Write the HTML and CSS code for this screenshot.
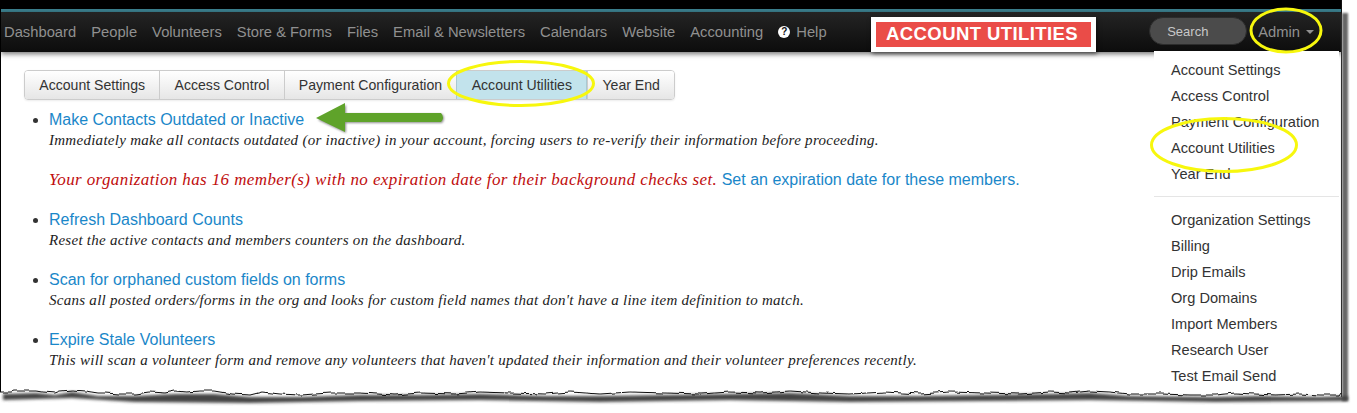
FILE: index.html
```html
<!DOCTYPE html>
<html lang="en">
<head>
<meta charset="utf-8">
<title>Account Utilities</title>
<link rel="stylesheet" href="styles.css">
</head>
<body>
<div class="shot">
  <div class="topband"></div>
  <nav class="navbar">
    <ul class="navlinks">
      <li>Dashboard</li>
      <li>People</li>
      <li>Volunteers</li>
      <li>Store &amp; Forms</li>
      <li>Files</li>
      <li>Email &amp; Newsletters</li>
      <li>Calendars</li>
      <li>Website</li>
      <li>Accounting</li>
      <li class="help"><span class="helpicon">?</span>Help</li>
    </ul>
    <div class="navright">
      <div class="search">Search</div>
      <div class="admin">Admin<span class="caret"></span></div>
    </div>
  </nav>
  <main class="content">
    <div class="tabs">
      <div class="tab">Account Settings</div>
      <div class="tab">Access Control</div>
      <div class="tab">Payment Configuration</div>
      <div class="tab active">Account Utilities</div>
      <div class="tab">Year End</div>
    </div>
    <ul class="utils">
      <li>
        <a class="link">Make Contacts Outdated or Inactive</a>
        <p class="desc">Immediately make all contacts outdated (or inactive) in your account, forcing users to re-verify their information before proceeding.</p>
      </li>
      <li class="plain">
        <p class="warn"><em>Your organization has 16 member(s) with no expiration date for their background checks set.</em> <a class="link">Set an expiration date for these members.</a></p>
      </li>
      <li>
        <a class="link">Refresh Dashboard Counts</a>
        <p class="desc">Reset the active contacts and members counters on the dashboard.</p>
      </li>
      <li>
        <a class="link">Scan for orphaned custom fields on forms</a>
        <p class="desc">Scans all posted orders/forms in the org and looks for custom field names that don't have a line item definition to match.</p>
      </li>
      <li>
        <a class="link">Expire Stale Volunteers</a>
        <p class="desc">This will scan a volunteer form and remove any volunteers that haven't updated their information and their volunteer preferences recently.</p>
      </li>
    </ul>
  </main>
  <div class="menu">
    <div class="menuitem">Account Settings</div>
    <div class="menuitem">Access Control</div>
    <div class="menuitem">Payment Configuration</div>
    <div class="menuitem">Account Utilities</div>
    <div class="menuitem">Year End</div>
    <div class="divider"></div>
    <div class="menuitem">Organization Settings</div>
    <div class="menuitem">Billing</div>
    <div class="menuitem">Drip Emails</div>
    <div class="menuitem">Org Domains</div>
    <div class="menuitem">Import Members</div>
    <div class="menuitem">Research User</div>
    <div class="menuitem">Test Email Send</div>
  </div>
  <div class="callout"><span>ACCOUNT UTILITIES</span></div>
</div>
<svg class="marks" width="1357" height="413" viewBox="0 0 1357 413" aria-hidden="true">
  <defs>
    <filter id="soft" x="-5%" y="-50%" width="110%" height="200%"><feGaussianBlur stdDeviation="1.4"/></filter>
    <filter id="softside" x="-300%" y="-5%" width="700%" height="110%"><feGaussianBlur stdDeviation="1.3"/></filter>
    <filter id="rough" x="-1%" y="-50%" width="102%" height="200%" filterUnits="objectBoundingBox">
      <feTurbulence type="fractalNoise" baseFrequency="0.09 0.02" numOctaves="2" seed="7"/>
      <feDisplacementMap in="SourceGraphic" scale="5" yChannelSelector="G" xChannelSelector="R"/>
    </filter>
    <filter id="arrowshadow" x="-20%" y="-50%" width="140%" height="200%"><feGaussianBlur stdDeviation="1.2"/></filter>
  </defs>
  <rect class="sideshadow" filter="url(#softside)" x="1342" y="13" width="6" height="388"/>
  <g filter="url(#rough)">
    <path class="tornwhite" d="M-6 392 L10 392 L14 391 L36 391 L42 392 L55 393 L60 391 L72 390 L85 391 L98 393 L106 393 L118 394 L135 394 L150 392 L165 393 L175 391 L186 392 L200 391 L214 391 L232 394 L250 395 L262 392 L280 394 L300 395 L330 393 L360 393 L395 395 L420 393 L455 394 L480 392 L510 393 L545 394 L570 392 L600 394 L630 392 L665 393 L700 394 L730 392 L760 393 L790 391 L820 393 L850 394 L885 392 L920 394 L950 392 L985 393 L1020 394 L1050 392 L1070 393 L1090 391 L1110 392 L1130 394 L1160 394 L1190 395 L1215 395 L1235 393 L1255 394 L1275 395 L1300 394 L1320 395 L1339 395 L1341 392 L1341 420 L-6 420 Z"/>
  </g>
  <g filter="url(#soft)">
    <path class="tornshadow" d="M3 394 L36 393 L55 395 L72 392 L98 396 L135 396 L175 394 L214 394 L250 397 L300 397 L360 395 L420 395 L480 394 L545 396 L600 396 L665 395 L730 394 L790 393 L850 396 L920 396 L985 395 L1050 394 L1090 393 L1130 396 L1215 397 L1255 396 L1320 397 L1348 396 L1348 401 L1215 402 L1090 400 L985 401 L850 402 L730 400 L600 402 L480 400 L360 401 L250 403 L135 402 L72 398 L3 400 Z"/>
  </g>
  <g filter="url(#rough)">
    <path class="tornline" d="M-6 392 L10 392 L14 391 L36 391 L42 392 L55 393 L60 391 L72 390 L85 391 L98 393 L106 393 L118 394 L135 394 L150 392 L165 393 L175 391 L186 392 L200 391 L214 391 L232 394 L250 395 L262 392 L280 394 L300 395 L330 393 L360 393 L395 395 L420 393 L455 394 L480 392 L510 393 L545 394 L570 392 L600 394 L630 392 L665 393 L700 394 L730 392 L760 393 L790 391 L820 393 L850 394 L885 392 L920 394 L950 392 L985 393 L1020 394 L1050 392 L1070 393 L1090 391 L1110 392 L1130 394 L1160 394 L1190 395 L1215 395 L1235 393 L1255 394 L1275 395 L1300 394 L1320 395 L1339 395 L1341 392"/>
  </g>
  <ellipse class="ring" cx="521" cy="83.500" rx="72.500" ry="22"/>
  <ellipse class="ring" cx="1286" cy="30.500" rx="35" ry="21.500"/>
  <ellipse class="ring" cx="1224" cy="145" rx="72.500" ry="26.500"/>
  <path class="arrowshade" filter="url(#arrowshadow)" d="M318 120 L346 105 L346 114 L442 114 Q446 118 442 123 L346 123 L346 133 Z"/>
  <path class="arrow" d="M316 118 L345 103 L345 113 L441 113 Q445 117.500 441 122 L345 122 L345 132 Z"/>
</svg>
</body>
</html>
```
FILE: styles.css
```css
* { box-sizing: border-box; }
html, body { margin: 0; padding: 0; background: #fff; }
body {
  width: 1357px;
  height: 413px;
  overflow: hidden;
  position: relative;
  font-family: "Liberation Sans", Arial, sans-serif;
}
.shot {
  position: relative;
  width: 1342px;
  height: 397px;
  border-left: 1px solid #000;
  border-right: 1px solid #111;
  background: #fff;
  overflow: hidden;
}
.topband {
  height: 12px;
  background: #000;
  border-bottom: 3px solid #3b7f8e;
}
.navbar {
  height: 40px;
  display: flex;
  align-items: center;
  justify-content: space-between;
  padding: 0 27px 0 3px;
  background: linear-gradient(#242424, #0c0c0c);
  box-shadow: 0 2px 5px rgba(0,0,0,.55);
  position: relative;
  color: #909090;
  font-size: 14.75px;
}
.navlinks {
  list-style: none;
  margin: 0;
  padding: 0;
  display: flex;
  gap: 15px;
}
.help { display: flex; align-items: center; }
.helpicon {
  width: 12px;
  height: 12px;
  border-radius: 50%;
  background: #fff;
  color: #111;
  font-size: 10px;
  font-weight: bold;
  line-height: 12px;
  text-align: center;
  margin-right: 6px;
}
.navright { display: flex; align-items: center; gap: 11px; }
.search {
  width: 98px;
  height: 28px;
  margin-top: -2px;
  padding-left: 17px;
  border-radius: 14px;
  background: #4b4b4b;
  border: 1px solid #2c2c2c;
  color: #c8c8c8;
  font-size: 13px;
  line-height: 27px;
}
.admin { display: flex; align-items: center; }
.caret {
  margin-left: 6px;
  border-left: 4px solid transparent;
  border-right: 4px solid transparent;
  border-top: 4px solid #909090;
}
.content { padding: 18px 0 0 23px; }
.tabs {
  display: inline-flex;
  height: 30px;
  border: 1px solid #ccc;
  border-radius: 4px;
  box-shadow: 0 1px 2px rgba(0,0,0,.08);
  overflow: hidden;
}
.tab {
  padding: 0 14.25px;
  font-size: 14.1px;
  line-height: 28px;
  color: #333;
  background: linear-gradient(#fff, #e6e6e6);
  border-left: 1px solid #ccc;
}
.tab:first-child { border-left: 0; }
.tab.active {
  background: #c2e3ec;
  border-left-color: #a9c9d2;
  border-right: 1px solid #a9c9d2;
}
.utils {
  margin: 10px 0 0;
  padding: 0 0 0 25px;
  color: #333;
}
.utils li { height: 60px; }
.utils li.plain { height: 40px; list-style: none; }
.link { color: #1a87c9; font-size: 16px; line-height: 20px; }
.desc, .warn { margin: 0; }
.desc {
  font-family: "Liberation Serif", Georgia, serif;
  font-style: italic;
  font-size: 15px;
  line-height: 20px;
  letter-spacing: .27px;
  color: #222;
}
.warn { line-height: 20px; white-space: nowrap; }
.warn em {
  font-family: "Liberation Serif", Georgia, serif;
  font-size: 17px;
  letter-spacing: .39px;
  color: #c00d0d;
}
.menu {
  position: absolute;
  top: 51px;
  left: 1153px;
  width: 185px;
  height: 347px;
  padding: 6px 0 0 17px;
  background: #fff;
  border-radius: 0 0 4px 4px;
  font-size: 14.6px;
  color: #333;
}
.menuitem { height: 26px; line-height: 26px; white-space: nowrap; }
.divider {
  height: 1px;
  margin: 9px 0 10px -17px;
  background: #e5e5e5;
}
.callout {
  position: absolute;
  top: 17px;
  left: 870px;
  width: 225px;
  height: 35px;
  padding: 5px;
  background: #fff;
  box-shadow: 1px 2px 4px rgba(0,0,0,.5);
}
.callout span {
  display: block;
  height: 25px;
  padding-left: 10px;
  background: #ea4c48;
  color: #fff;
  font-size: 18.5px;
  font-weight: bold;
  letter-spacing: .42px;
  line-height: 23px;
  white-space: nowrap;
}
.marks { position: absolute; top: 0; left: 0; }
.tornwhite { fill: #fff; }
.tornshadow { fill: #444; }
.sideshadow { fill: #666; }
.tornline { fill: none; stroke: #111; stroke-width: 1; }
.ring { fill: none; stroke: #f7f70d; stroke-width: 3; }
.arrow { fill: #5fa32a; }
.arrowshade { fill: rgba(0,0,0,.45); }
```
